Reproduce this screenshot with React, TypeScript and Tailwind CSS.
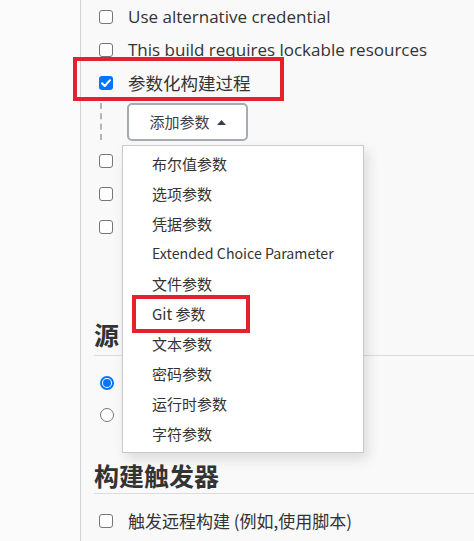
import React from "react";

const latin = { fontFamily: '"Open Sans", "Noto Sans CJK SC", sans-serif' };
const cjk = { fontFamily: '"Noto Sans CJK SC", sans-serif' };

function Box({ checked = false }: { checked?: boolean }) {
  return checked ? (
    <span className="flex h-[14px] w-[14px] shrink-0 items-center justify-center rounded-[3px] bg-[#0075ff]">
      <svg width="10" height="8" viewBox="0 0 10 8">
        <path d="M1 4.2 L3.8 7 L9 1.2" fill="none" stroke="#fff" strokeWidth="2" strokeLinecap="round" strokeLinejoin="round" />
      </svg>
    </span>
  ) : (
    <span className="h-[14px] w-[14px] shrink-0 rounded-[3px] border-[1.5px] border-[#767676] bg-white" />
  );
}

function Row({ children, checked }: { children?: React.ReactNode; checked?: boolean }) {
  return (
    <div className="flex h-[33px] items-center gap-[15px] pl-[5px]">
      <Box checked={checked} />
      <span className="text-[17px] leading-none text-[#333]">{children}</span>
    </div>
  );
}

const items = [
  "布尔值参数",
  "选项参数",
  "凭据参数",
  "Extended Choice Parameter",
  "文件参数",
  "Git 参数",
  "文本参数",
  "密码参数",
  "运行时参数",
  "字符参数",
];

export default function App() {
  return (
    <div className="relative flex h-[541px] w-[474px] overflow-hidden bg-[#f9f9f9]" style={latin}>
      <div className="w-[81px] shrink-0 border-r border-[#d4d4d4] bg-[#fbfbfb]" />
      <div className="flex-1 pl-[13px]">
        <Row>Use alternative credential</Row>
        <Row>This build requires lockable resources</Row>
        <div className="flex h-[33px] items-center gap-[15px] pl-[5px]">
          <Box checked />
          <span className="text-[17.5px] leading-none text-[#333]" style={cjk}>
            参数化构建过程
          </span>
        </div>
        <div className="ml-[6px] mt-[4px] flex h-[37px] border-l-2 border-dashed border-[#b5b5b5] pl-[25px]">
          <button className="flex h-[38px] w-[121px] items-center justify-center gap-[7px] rounded-[5px] border-2 border-[#a4abb3] bg-white text-[15px] text-[#3a404b]" style={cjk}>
            添加参数
            <svg width="9" height="5" viewBox="0 0 9 5"><path d="M0 5 L4.5 0 L9 5 Z" fill="#3a404b" /></svg>
          </button>
        </div>
        <div className="mt-[4px]">
          <Row />
          <Row />
          <Row />
        </div>
        <div className="mt-[76px] border-b border-[#dcdcdc] pb-[6px]">
          <h2 className="whitespace-nowrap text-[25px] font-bold leading-[30px] text-[#333]" style={cjk}>源</h2>
        </div>
        <div className="mt-[20px] flex flex-col gap-[18px] pl-[6px]">
          <span className="flex h-[14px] w-[14px] items-center justify-center rounded-full border-2 border-[#0075ff] bg-white">
            <span className="h-[8px] w-[8px] rounded-full bg-[#0075ff]" />
          </span>
          <span className="h-[14px] w-[14px] rounded-full border-[1.5px] border-[#767676] bg-white" />
        </div>
        <div className="mt-[38px] border-b border-[#dcdcdc] pb-[3px]">
          <h2 className="text-[25px] font-bold leading-[30px] text-[#333]" style={cjk}>构建触发器</h2>
        </div>
        <div className="mt-[10px] flex h-[33px] items-center gap-[15px] pl-[5px]">
          <Box />
          <span className="text-[17px] leading-none text-[#333]" style={cjk}>
            触发远程构建 (例如,使用脚本)
          </span>
        </div>
      </div>

      {/* red highlight 1 */}
      <div className="pointer-events-none absolute left-[73px] top-[57px] h-[44px] w-[211px] border-4 border-[#e5212b]" />

      {/* dropdown menu */}
      <div className="absolute left-[122px] top-[145px] w-[242px] border border-[#c9c9c9] bg-white py-[3px] shadow-[4px_6px_12px_rgba(0,0,0,0.12)]">
        {items.map((t) => (
          <div
            key={t}
            className={
              t.startsWith("Extended")
                ? "flex h-[30px] items-center pl-[29px] text-[14.2px] text-[#333]"
                : "flex h-[30px] items-center pl-[29px] text-[15px] text-[#333]"
            }
            style={cjk}
          >
            {t}
          </div>
        ))}
      </div>

      {/* red highlight 2 */}
      <div className="pointer-events-none absolute left-[132px] top-[295px] h-[38px] w-[118px] border-4 border-[#e5212b]" />
    </div>
  );
}
